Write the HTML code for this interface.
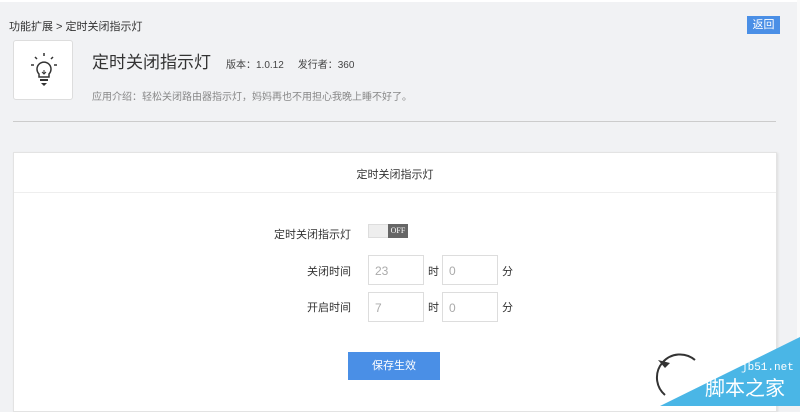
<!DOCTYPE html>
<html><head><meta charset="utf-8"><style>
*{margin:0;padding:0;box-sizing:border-box}
body{width:800px;height:406px;overflow:hidden;background:#f1f2f4;font-family:"Liberation Sans","Noto Sans CJK SC",sans-serif;position:relative;color:#333}
.a{position:absolute}
.inp{position:absolute;width:56px;height:30px;border:1px solid #ddd;background:#fff;font-size:12px;color:#aaa;padding:8px 0 0 6px}
.lbl{position:absolute;font-size:11px;color:#333}
</style></head><body>
<div class="a" style="left:0;top:0;width:800px;height:2px;background:#fff"></div>
<div class="a" style="left:797px;top:0;width:3px;height:406px;background:#fafafa"></div>
<div class="a" style="left:9px;top:18px;font-size:11px;color:#333">功能扩展 &gt; 定时关闭指示灯</div>
<div class="a" style="left:747px;top:16px;width:33px;height:18px;background:#4a8fe6;color:#fff;font-size:11px;text-align:center;line-height:18px">返回</div>
<div class="a" style="left:13px;top:40px;width:60px;height:60px;background:#fff;border:1px solid #ddd;border-radius:3px">
<svg width="60" height="60" viewBox="0 0 60 60"><g fill="none" stroke="#333" stroke-width="1.5"><path d="M25 33 a7 7 0 1 1 10 0 v3 h-10z"/><path d="M30 29v4M28 31l2 2 2-2" stroke-width="1"/><path d="M30 12v3M21 16l2 2M39 16l-2 2M17 24h3M40 24h3"/></g><path d="M26 38h8v2h-8zM27 42h6l-3 3z" fill="#333"/></svg></div>
<div class="a" style="left:92px;top:48px;font-size:17px;color:#333">定时关闭指示灯</div>
<div class="a" style="left:226px;top:56px;font-size:10px;color:#444">版本：1.0.12&nbsp;&nbsp;&nbsp;&nbsp;&nbsp;发行者：360</div>
<div class="a" style="left:92px;top:88px;font-size:10px;color:#888">应用介绍：轻松关闭路由器指示灯，妈妈再也不用担心我晚上睡不好了。</div>
<div class="a" style="left:13px;top:121px;width:763px;height:1px;background:#ccc"></div>
<div class="a" style="left:13px;top:152px;width:764px;height:260px;background:#fff;border:1px solid #e3e3e3;box-shadow:1px 1px 2px #ddd"></div>
<div class="a" style="left:14px;top:192px;width:762px;height:1px;background:#eee"></div>
<div class="a" style="left:14px;top:166px;width:762px;text-align:center;font-size:11px;color:#333">定时关闭指示灯</div>
<div class="lbl" style="left:274px;top:226px">定时关闭指示灯</div>
<div class="a" style="left:368px;top:224px;width:40px;height:14px;background:#eee;border:1px solid #ddd"></div>
<div class="a" style="left:388px;top:224px;width:20px;height:14px;background:#666;color:#fff;font-size:8px;text-align:center;line-height:14px;font-family:'Liberation Serif',serif">OFF</div>
<div class="lbl" style="left:307px;top:263px">关闭时间</div>
<div class="inp" style="left:368px;top:255px">23</div>
<div class="lbl" style="left:428px;top:263px">时</div>
<div class="inp" style="left:442px;top:255px">0</div>
<div class="lbl" style="left:502px;top:263px">分</div>
<div class="lbl" style="left:307px;top:299px">开启时间</div>
<div class="inp" style="left:368px;top:292px">7</div>
<div class="lbl" style="left:428px;top:299px">时</div>
<div class="inp" style="left:442px;top:292px">0</div>
<div class="lbl" style="left:502px;top:299px">分</div>
<div class="a" style="left:348px;top:352px;width:92px;height:28px;background:#4a8fe6;color:#fff;font-size:11px;text-align:center;line-height:28px">保存生效</div>
<svg class="a" style="left:0;top:0" width="800" height="406"><polygon points="660,406 800,337 800,406" fill="#4ab6e6"/><path d="M665 395 a18 18 0 0 1 30 -35" fill="none" stroke="#333" stroke-width="2"/><path d="M658 360l12 3-5 5z" fill="#333"/></svg>
<div class="a" style="left:741px;top:362px;font-size:11px;color:#fff;font-family:'Liberation Mono',monospace">jb51.net</div>
<div class="a" style="left:705px;top:377px;font-size:20px;color:#fff;line-height:24px">脚本之家</div>
</body></html>
